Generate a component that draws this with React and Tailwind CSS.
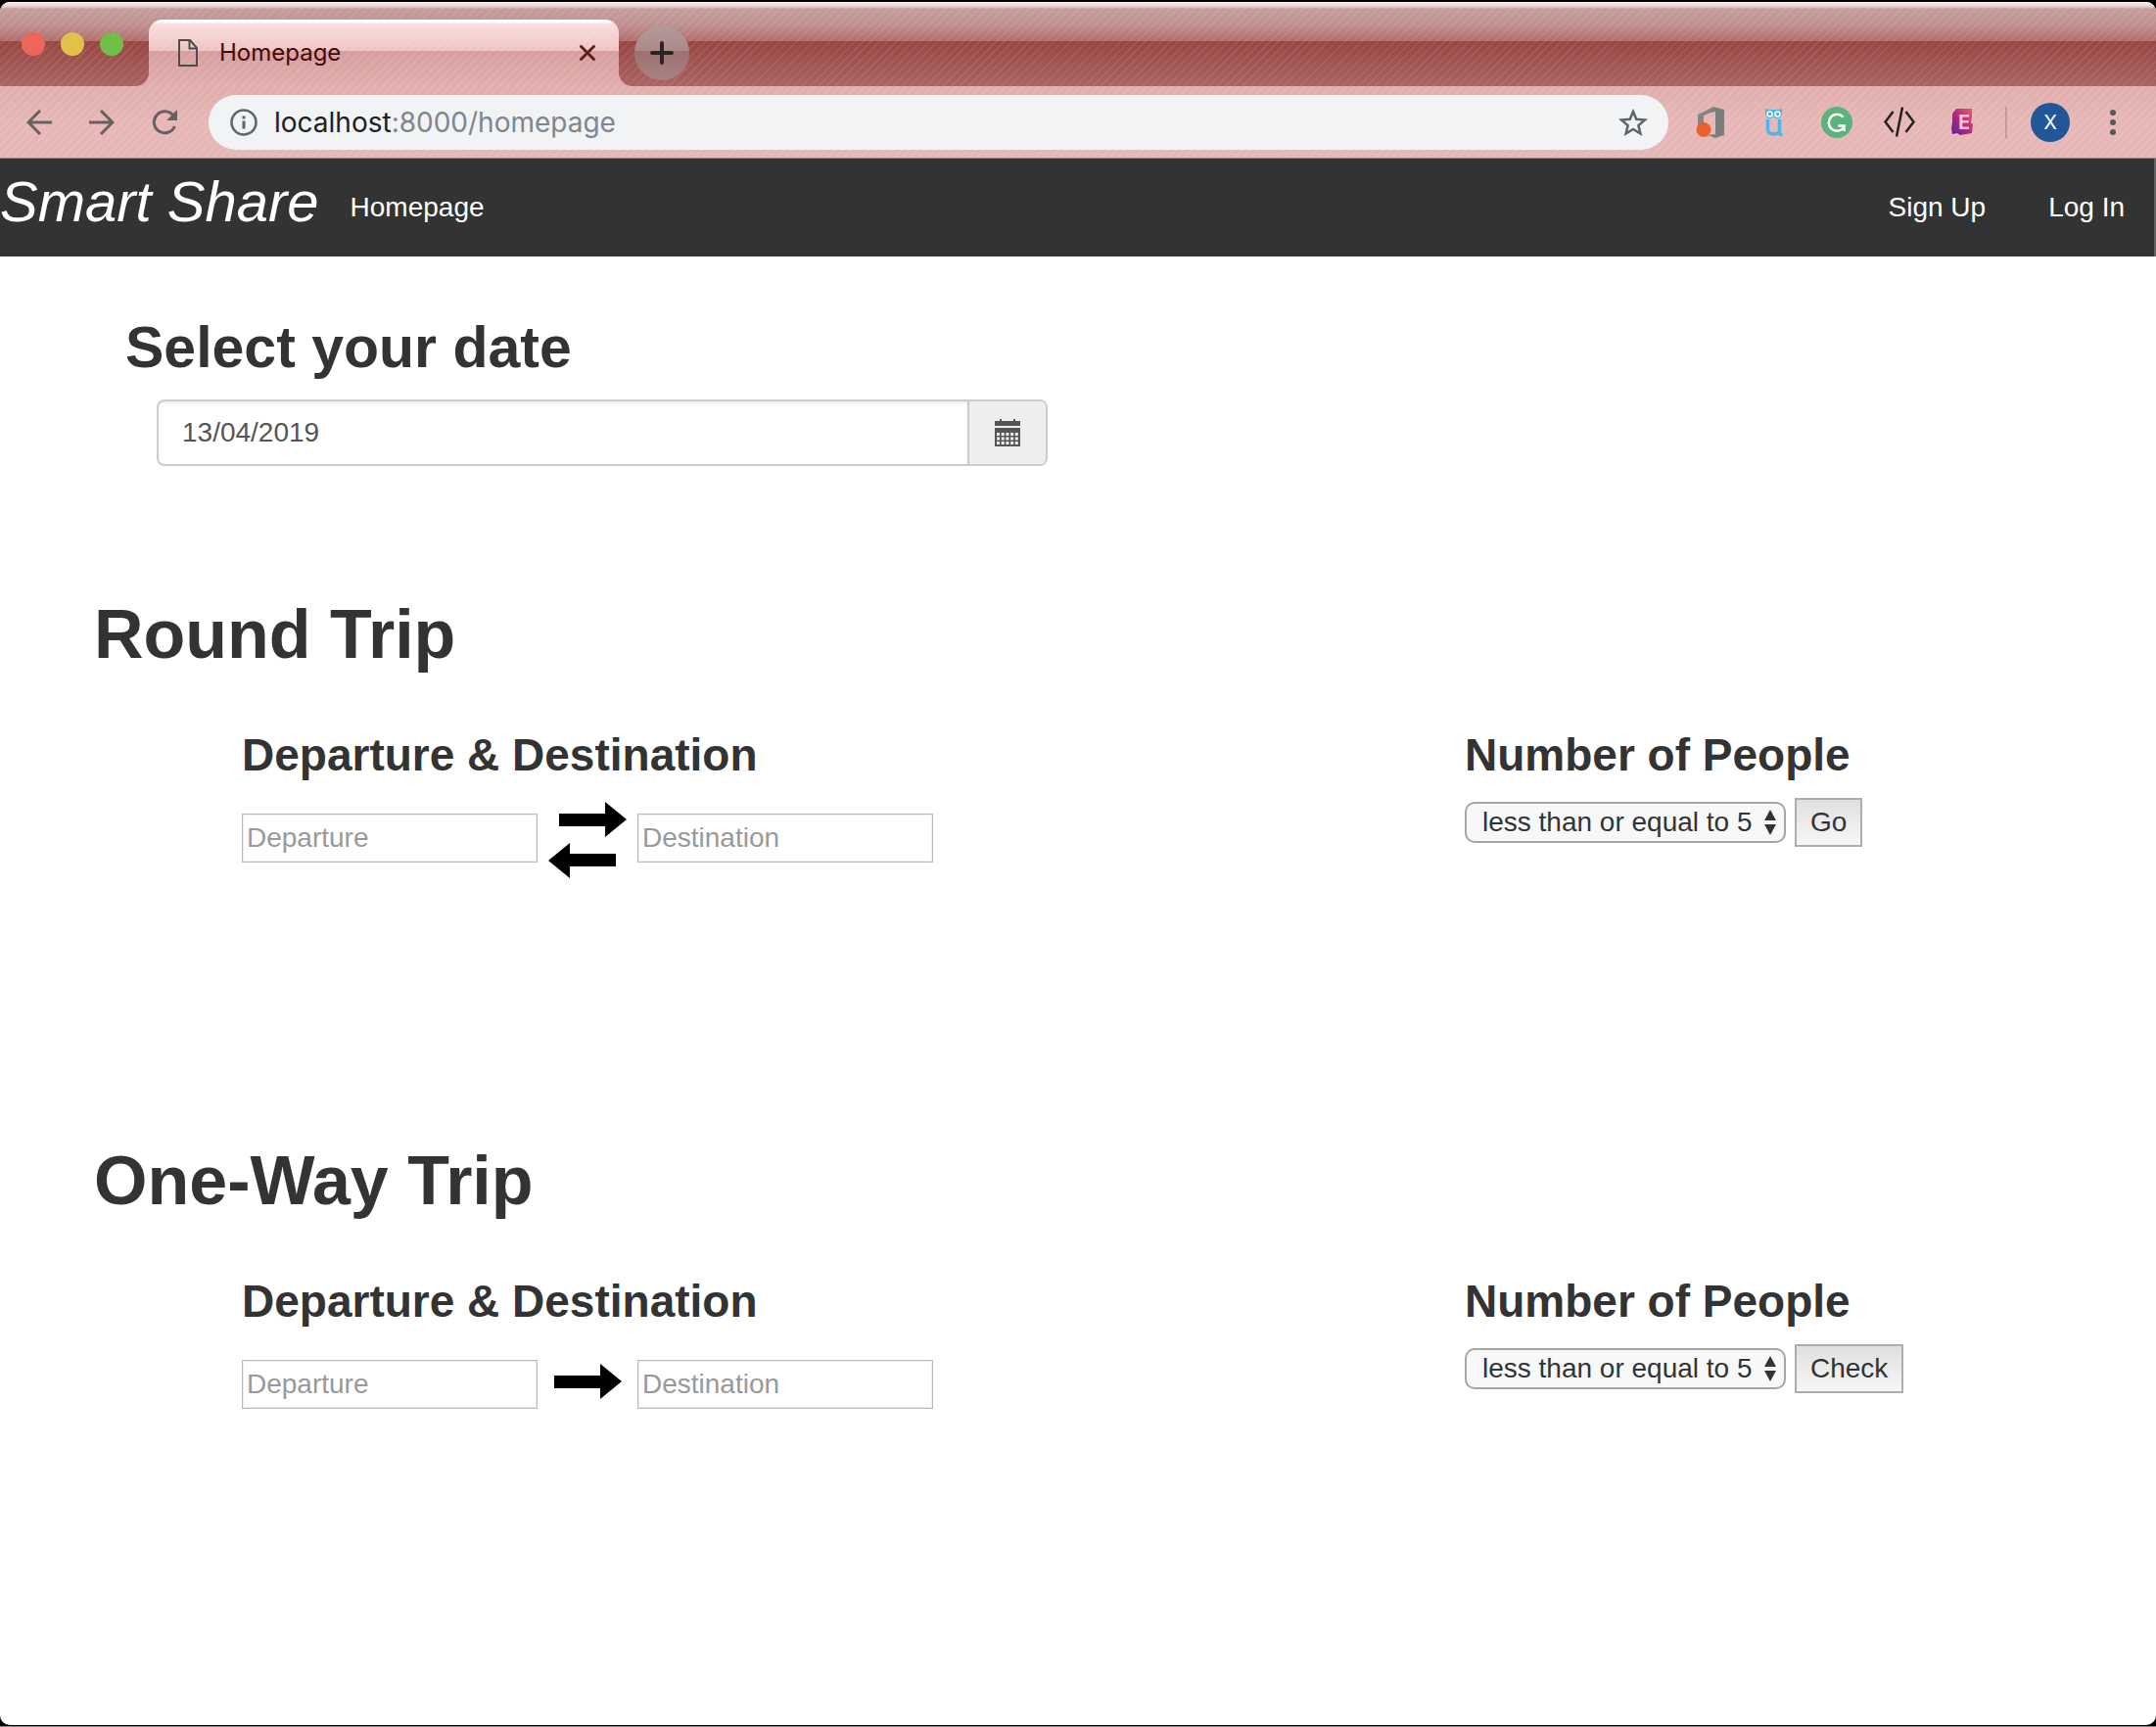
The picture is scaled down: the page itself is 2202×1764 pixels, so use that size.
import { useState } from "react";

const darkStrip =
  "bg-[repeating-linear-gradient(135deg,rgba(255,255,255,0.07)_0px,rgba(255,255,255,0.07)_2px,transparent_2px,transparent_6px),linear-gradient(to_bottom,#fbf1ef_0px,#e3cccb_5px,#c79d9c_7px,#bf9391_22px,#b16e6c_40px,#974542_40px,#a96464_86px)]";

const lightTab =
  "bg-[repeating-linear-gradient(135deg,rgba(255,255,255,0.08)_0px,rgba(255,255,255,0.08)_2px,transparent_2px,transparent_6px),linear-gradient(to_bottom,#ffffff_0px,#ffffff_2px,#f9dcdc_5px,#eec4c3_32px,#d69e9d_32px,#e0aeac_68px)]";

const lightStrip =
  "bg-[repeating-linear-gradient(135deg,rgba(255,255,255,0.08)_0px,rgba(255,255,255,0.08)_2px,transparent_2px,transparent_6px),linear-gradient(to_bottom,#e0aeac,#e6b7b6_50%,#e6b7b7)]";

function TabBar() {
  return (
    <div className="flex h-[86px]">
      <div
        className={`flex w-[152px] shrink-0 items-center gap-4 rounded-br-[14px] pl-[22px] ${darkStrip}`}
      >
        <span className="size-6 rounded-full bg-[#ee655a]"></span>
        <span className="size-6 rounded-full bg-[#e1c04c]"></span>
        <span className="size-6 rounded-full bg-[#71bf46]"></span>
      </div>

      <div className={`flex w-[480px] shrink-0 ${darkStrip}`}>
        <div
          className={`mt-[18px] flex flex-1 items-center rounded-t-[14px] pr-6 pl-[30px] ${lightTab}`}
        >
          <svg viewBox="0 0 20 28" className="h-7 w-5" fill="none" stroke="#4d4d4d" strokeWidth="2">
            <path d="M1 1h11l7 8v18H1z" />
            <path d="M11.500 1v8.500H19" />
          </svg>
          <span className="ml-[22px] flex-1 text-2xl text-[#470707]">Homepage</span>
          <button aria-label="Close tab">
            <svg viewBox="0 0 16 16" className="size-4" stroke="#5f2020" strokeWidth="3" strokeLinecap="round">
              <path d="M1.500 1.500l13 13M14.500 1.500l-13 13" />
            </svg>
          </button>
        </div>
      </div>

      <div className={`flex flex-1 items-center rounded-bl-[14px] pt-[18px] pl-4 ${darkStrip}`}>
        <button
          aria-label="New tab"
          className="flex size-14 items-center justify-center rounded-full bg-[linear-gradient(to_bottom,#b59b9a,#aa8a89_46%,#9c7170_46%,#a98281)]"
        >
          <svg viewBox="0 0 24 24" className="size-6" stroke="#2b2326" strokeWidth="4" strokeLinecap="round">
            <path d="M12 2v20M2 12h20" />
          </svg>
        </button>
      </div>
    </div>
  );
}

function Extensions() {
  return (
    <div className="flex items-center gap-8">
      <button aria-label="Office">
        <svg viewBox="0 0 32 32" className="size-8">
          <path d="M2 8L18 0v5L8 9v9l-6 2z" fill="#858585" />
          <path d="M18 0l11 3v26l-9 3-8-3 8-1V5l-6 1z" fill="#7d7d7d" />
          <circle cx="8" cy="23.500" r="7.500" fill="#e8622a" />
        </svg>
      </button>
      <button aria-label="Owl">
        <svg viewBox="0 0 32 32" className="size-8" fill="none" stroke="#4fb5e6">
          <path d="M7 2q3 1 5 1h7q2 0 5-1v6H7z" fill="#4fb5e6" stroke="none" />
          <circle cx="11.500" cy="7.500" r="3.500" fill="#4fb5e6" strokeWidth="2" />
          <circle cx="19.500" cy="7.500" r="3.500" fill="#4fb5e6" strokeWidth="2" />
          <circle cx="11.500" cy="7.500" r="2.500" stroke="#fff" strokeWidth="1.500" />
          <circle cx="19.500" cy="7.500" r="2.500" stroke="#fff" strokeWidth="1.500" />
          <path d="M9.500 13v10q0 5 6 5t6-5V13v14q0 1.500 3 1.500" strokeWidth="3.500" />
        </svg>
      </button>
      <button aria-label="Grammarly">
        <svg viewBox="0 0 32 32" className="size-8" fill="none" stroke="#fff" strokeWidth="2.500">
          <circle cx="16" cy="16" r="16" fill="#5ab37b" stroke="none" />
          <path d="M22.500 10.500a8.500 8.500 0 1 0 0 11.500" />
          <path d="M17.500 19.500h6v5.500" />
        </svg>
      </button>
      <button aria-label="Source">
        <svg viewBox="0 0 32 32" className="size-8" fill="none" stroke="#222" strokeWidth="2.500">
          <path d="M9.500 5L1.500 15.500l8 10.500M22.500 5l8 10.500-8 10.500M19 .500l-6 30" />
        </svg>
      </button>
      <button aria-label="E">
        <svg viewBox="0 0 32 32" className="size-8">
          <defs>
            <linearGradient id="e" x1="1" y1="0" x2="0" y2="1">
              <stop offset="0" stopColor="#e8606a" />
              <stop offset="0.500" stopColor="#ad2c80" />
              <stop offset="1" stopColor="#5c1f9a" />
            </linearGradient>
          </defs>
          <path d="M10 2h16v8l-1 7h2l-1 10-12 2-3-2-5 1-1-6 1-6V7z" fill="url(#e)" />
          <text x="12" y="23" fontSize="20" fontWeight="700" fill="#eec3c8">E</text>
        </svg>
      </button>
    </div>
  );
}

function Toolbar() {
  return (
    <div className={`flex h-[74px] items-center border-b border-[#a08383] pr-[41px] pl-[27px] ${lightStrip}`}>
      <div className="flex items-center gap-[38px]">
        <button aria-label="Back">
          <svg viewBox="0 0 26 26" className="size-[26px]" fill="none" stroke="#6a6061" strokeWidth="3">
            <path d="M26 13H2M14 1L2 13l12 12" />
          </svg>
        </button>
        <button aria-label="Forward">
          <svg viewBox="0 0 26 26" className="size-[26px]" fill="none" stroke="#6a6061" strokeWidth="3">
            <path d="M0 13h24M12 1l12 12-12 12" />
          </svg>
        </button>
        <button aria-label="Reload">
          <svg viewBox="0 0 26 26" className="size-[26px]" fill="none" stroke="#6a6061" strokeWidth="3">
            <path d="M22 6A11 11 0 1 0 23.500 17" />
            <path d="M26 0v11H15z" fill="#6a6061" stroke="none" />
          </svg>
        </button>
      </div>

      <div className="ml-8 flex h-14 flex-1 items-center rounded-full bg-[#f1f3f5] pr-[21px] pl-[22px]">
        <svg viewBox="0 0 28 28" className="size-7" fill="none" stroke="#606367" strokeWidth="2.500">
          <circle cx="14" cy="14" r="12.500" />
          <path d="M14 12.500v8M14 7.500v3" strokeWidth="3" />
        </svg>
        <span className="ml-[17px] flex-1 text-[28px] text-[#80868b]">
          <span className="text-[#202124]">localhost</span>:8000/homepage
        </span>
        <button aria-label="Bookmark this page">
          <svg viewBox="0 0 30 30" className="size-[30px]" fill="none" stroke="#5f6368" strokeWidth="2.500">
            <path d="M15 4l3.300 7.700 8.700.7-6.600 5.700 2 8.400L15 22l-7.400 4.500 2-8.400L3 12.400l8.700-.7z" />
          </svg>
        </button>
      </div>

      <div className="ml-7 flex items-center">
        <Extensions />
        <span className="ml-7 h-8 w-[2px] bg-[#c49b9b]"></span>
        <button className="ml-6 size-10 rounded-full bg-[#215796] text-xl text-white">X</button>
        <button aria-label="Menu" className="ml-[41px]">
          <svg viewBox="0 0 6 26" className="h-[26px] w-[6px]" fill="#5d5656">
            <circle cx="3" cy="3" r="3" />
            <circle cx="3" cy="13" r="3" />
            <circle cx="3" cy="23" r="3" />
          </svg>
        </button>
      </div>
    </div>
  );
}

function Navbar() {
  return (
    <nav className="flex h-[100px] items-center border-r-2 border-[#636363] bg-[#333] pr-[30px] text-white">
      <a href="#" className="mb-3 text-[58px] leading-none italic">
        Smart Share
      </a>
      <a href="#" className="ml-8">
        Homepage
      </a>
      <a href="#" className="ml-auto">
        Sign Up
      </a>
      <a href="#" className="ml-16">
        Log In
      </a>
    </nav>
  );
}

function CalendarIcon() {
  return (
    <svg viewBox="0 0 26 28" className="h-7 w-[26px]" fill="#555">
      <path d="M5 0h2v2h12V0h2v2h5v5H0V2h5zM0 9h26v19H0z" />
      <path
        d="M2 15.500h22M2 20h22M2 24.500h22"
        stroke="#eee"
        strokeWidth="3"
        strokeDasharray="3 1.700"
      />
    </svg>
  );
}

function DatePicker() {
  const [date, setDate] = useState("13/04/2019");
  return (
    <section>
      <h2 className="pl-32 text-[59px] leading-[66px] font-bold">
        <label htmlFor="date">Select your date</label>
      </h2>
      <div className="mt-5 ml-40 flex h-[68px] max-w-[910px] overflow-hidden rounded-lg border-2 border-[#ccc]">
        <input
          id="date"
          type="text"
          value={date}
          onChange={(e) => setDate(e.target.value)}
          className="min-w-0 flex-1 px-6 text-[#555] shadow-[inset_0_2px_2px_rgba(0,0,0,0.075)] outline-none"
        />
        <button
          aria-label="Open calendar"
          className="flex w-20 items-center justify-center border-l-2 border-[#ccc] bg-[#eee]"
        >
          <CalendarIcon />
        </button>
      </div>
    </section>
  );
}

function RoundArrows() {
  return (
    <svg viewBox="0 0 80 82" className="h-[82px] w-20">
      <path d="M11 16h47V4l22 18-22 18V29H11z" />
      <path d="M69 57H22V46L0 64l22 18V70h47z" />
    </svg>
  );
}

function OneWayArrow() {
  return (
    <svg viewBox="0 0 80 82" className="h-[82px] w-20">
      <path d="M6 32h47V20l22 18-22 18V45H6z" />
    </svg>
  );
}

function TripForm({ id, title, arrows, action }) {
  const field =
    "h-[50px] w-[302px] border border-[#b9b9b9] px-1 shadow-[inset_0_0_0_1px_#eee] outline-none placeholder:text-[#999]";
  return (
    <section className="h-[558px]">
      <h1 className="pl-24 text-[70px] leading-20 font-bold">{title}</h1>
      <form
        className="mt-[57px] grid grid-cols-[1249fr_706fr] pl-[247px]"
        onSubmit={(e) => e.preventDefault()}
      >
        <div>
          <h3 className="text-[46px] leading-[52px] font-bold">Departure &amp; Destination</h3>
          <div className="mt-[18px] flex items-center gap-[11px]">
            <input type="text" aria-label="Departure" placeholder="Departure" className={field} />
            {arrows}
            <input type="text" aria-label="Destination" placeholder="Destination" className={field} />
          </div>
        </div>
        <div>
          <h3 className="text-[46px] leading-[52px] font-bold">
            <label htmlFor={id}>Number of People</label>
          </h3>
          <div className="mt-[18px] flex items-center gap-[9px]">
            <div className="relative">
              <select
                id={id}
                className="h-[42px] w-[328px] appearance-none rounded-[10px] border-2 border-[#a6a6a6] bg-[#f8f8f8] pl-4 leading-8 outline-none"
              >
                <option>less than or equal to 5</option>
                <option>more than 5</option>
              </select>
              <svg
                viewBox="0 0 12 26"
                className="pointer-events-none absolute top-2 right-[10px] h-[26px] w-3"
                fill="#333"
              >
                <path d="M6 0l6 11H0zM6 26l6-11H0z" />
              </svg>
            </div>
            <button className="h-[50px] border-2 border-[#adadad] bg-linear-to-b from-[#e0e0e0] to-[#f7f7f7] px-[14px]">
              {action}
            </button>
          </div>
        </div>
      </form>
    </section>
  );
}

function App() {
  return (
    <div className="flex min-h-screen flex-col border-b border-[#8a8a8a] bg-black pt-[2px] pb-px font-['Liberation_Sans',Arial,sans-serif] text-[28px] leading-10 text-[#333]">
      <div className="flex flex-1 flex-col overflow-hidden rounded-[10px] bg-white">
        <header className="bg-[#e0aeac] font-[Inter,sans-serif]">
          <TabBar />
          <Toolbar />
        </header>
        <Navbar />
        <main className="pt-[60px]">
          <DatePicker />
          <div className="mt-[132px]">
            <TripForm id="round-people" title="Round Trip" arrows={<RoundArrows />} action="Go" />
            <TripForm id="oneway-people" title="One-Way Trip" arrows={<OneWayArrow />} action="Check" />
          </div>
        </main>
      </div>
    </div>
  );
}

export default App;
